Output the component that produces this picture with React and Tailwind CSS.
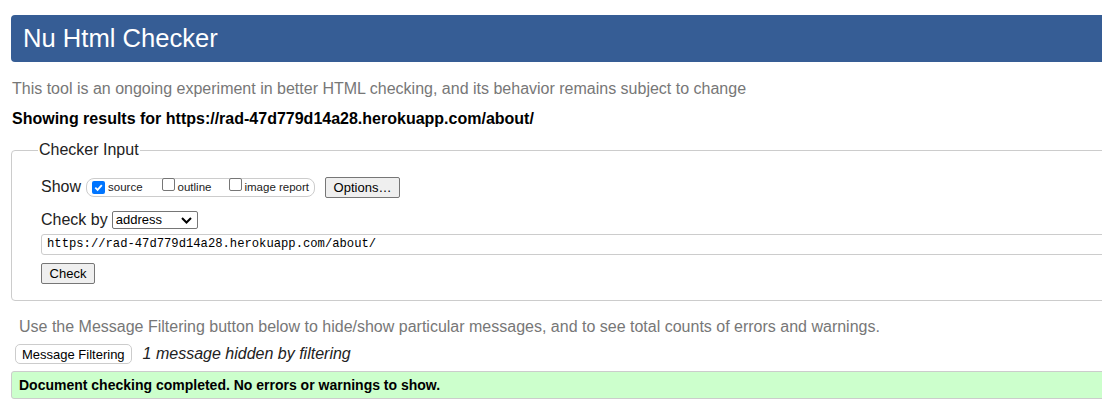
import React from 'react';

function Box({ checked }) {
  return (
    <span
      className={
        checked
          ? 'inline-flex h-[13px] w-[13px] items-center justify-center rounded-[2px] bg-[#0075ff]'
          : 'inline-block h-[13px] w-[13px] rounded-[2px] border border-[#767676] bg-white'
      }
    >
      {checked && (
        <svg width="11" height="11" viewBox="0 0 12 12">
          <path d="M2.5 6.2 L5 8.6 L9.6 3.4" fill="none" stroke="white" strokeWidth="2" />
        </svg>
      )}
    </span>
  );
}

export default function App() {
  return (
    <div className="h-[403px] w-[1102px] overflow-hidden bg-white font-['Liberation_Sans',Arial,sans-serif]">
      <div className="w-[1300px] pl-[11px]">
        <div className="mt-[15px] flex h-[47px] items-center rounded-[4px] bg-[#365d95] pl-[12px]">
          <h1 className="text-[25.6px] leading-none text-white">Nu Html Checker</h1>
        </div>

        <p className="mt-[18px] pl-[1px] text-[16px] leading-[18px] text-[#777]">
          This tool is an ongoing experiment in better HTML checking, and its behavior remains subject to change
        </p>
        <p className="mt-[12px] pl-[1px] text-[16px] font-bold leading-[18px] text-black">
          Showing results for https://rad-47d779d14a28.herokuapp.com/about/
        </p>

        <fieldset className="mt-[13px] h-[160px] rounded-[4px] border border-[#ccc] pl-[29px] pr-0">
          <legend className="-ml-[3px] px-[1px] text-[16px] leading-[18px] text-[#222]">Checker Input</legend>

          <div className="mt-[16px] flex items-center">
            <span className="text-[16px] text-[#222]">Show</span>
            <div className="ml-[5px] flex h-[19px] items-center rounded-[8px] border border-[#ccc] pl-[5px] pr-[5px] text-[11.5px] text-[#222]">
              <Box checked />
              <span className="ml-[3px] mt-[2px]">source</span>
              <span className="ml-[19px]"><Box /></span>
              <span className="ml-[3px] mt-[2px]">outline</span>
              <span className="ml-[18px]"><Box /></span>
              <span className="ml-[2px] mt-[2px]">image report</span>
            </div>
            <button className="ml-[10px] h-[21px] w-[75px] rounded-[2px] border border-[#767676] bg-[#efefef] text-[13px] text-black">
              Options…
            </button>
          </div>

          <div className="mt-[9px] flex items-center">
            <span className="text-[16px] text-[#222]">Check by</span>
            <div className="ml-[4px] flex h-[18px] w-[86px] items-center justify-between rounded-[2px] border border-[#767676] bg-white pl-[3px] pr-[5px] text-[13px] text-black">
              <span>address</span>
              <svg width="11" height="7" viewBox="0 0 11 7">
                <path d="M1 1 L5.5 5.5 L10 1" fill="none" stroke="black" strokeWidth="2" />
              </svg>
            </div>
          </div>

          <div className="mt-[2px] flex h-[21px] items-center rounded-[3px] border border-[#ccc] pl-[5px] font-['Liberation_Mono','DejaVu_Sans_Mono',monospace] text-[12.2px] text-black">
            https://rad-47d779d14a28.herokuapp.com/about/
          </div>

          <button className="mt-[8px] h-[21px] w-[54px] rounded-[2px] border border-[#767676] bg-[#efefef] text-[13px] text-black">
            Check
          </button>
        </fieldset>

        <p className="mt-[17px] pl-[8px] text-[16px] leading-[18px] text-[#777]">
          Use the Message Filtering button below to hide/show particular messages, and to see total counts of errors and warnings.
        </p>

        <div className="mt-[6px] flex items-center">
          <button className="ml-[4px] h-[20px] rounded-[5px] border border-[#ccc] bg-white px-[6px] text-[13px] text-black">
            Message Filtering
          </button>
          <span className="ml-[11px] text-[16px] italic text-[#222]">1 message hidden by filtering</span>
        </div>

        <div className="mt-[5px] flex h-[28px] items-center rounded-[3px] border border-[#ccc] bg-[#ccffcc] pl-[7px] text-[14px] font-bold text-black">
          Document checking completed. No errors or warnings to show.
        </div>
      </div>
    </div>
  );
}
